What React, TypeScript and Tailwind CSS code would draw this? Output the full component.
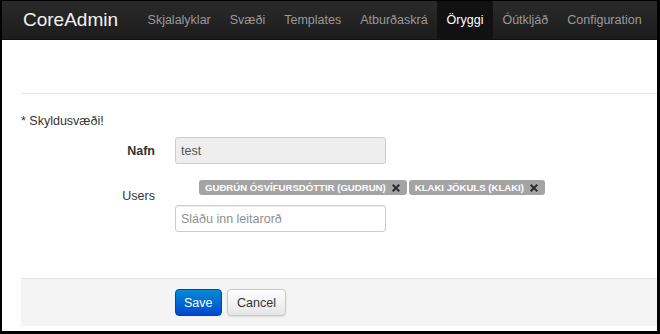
import React from "react";

const navItems = ["Skjalalyklar", "Svæði", "Templates", "Atburðaskrá", "Öryggi", "Óútkljáð", "Configuration"];

const users = [
  { name: "Guðrún Ósvífursdóttir", login: "gudrun" },
  { name: "Klaki Jökuls", login: "klaki" },
];

function RemoveIcon() {
  return (
    <svg width="8" height="8" viewBox="0 0 8 8" className="ml-[6px]">
      <path d="M1.4 1.4 L6.6 6.6 M6.6 1.4 L1.4 6.6" stroke="#2a2a2a" strokeWidth="2" strokeLinecap="square" />
    </svg>
  );
}

function Navbar() {
  return (
    <div className="flex h-[39px] items-stretch bg-gradient-to-b from-[#2a2a2a] to-[#1c1c1c] border-b border-[#111]">
      <div className="flex items-center pl-[21px] pr-[20px] text-[19px] text-[#f2f2f2]">CoreAdmin</div>
      {navItems.map((item) => (
        <div
          key={item}
          className={
            item === "Öryggi"
              ? "flex items-center px-[9.5px] text-[12.5px] text-white bg-[#111]"
              : "flex items-center px-[9.5px] text-[12.5px] text-[#9a9a9a]"
          }
        >
          {item}
        </div>
      ))}
    </div>
  );
}

export default function App() {
  return (
    <div className="w-[660px] h-[334px] flex flex-col bg-white border-black border-t border-l-2 border-r-[3px] border-b-[3px] font-['Liberation_Sans',Arial,sans-serif] text-[#333] text-[12.5px] leading-[18px]">
      <Navbar />
      <div className="flex flex-col pl-[19px]">
        <div className="h-[54px] border-b border-[#e5e5e5]" />
        <p className="mt-[18px]">* Skyldusvæði!</p>

        <div className="flex mt-[7px]">
          <label className="w-[134px] text-right font-bold pt-[5px]">Nafn</label>
          <input
            disabled
            value="test"
            readOnly
            className="ml-[20px] w-[211px] h-[27px] px-[5px] rounded-[3px] border border-[#ccc] bg-[#eee] text-[#555] text-[12.5px]"
          />
        </div>

        <div className="flex mt-[16px]">
          <label className="w-[134px] text-right pt-[7px]">Users</label>
          <div className="ml-[20px] flex flex-col">
            <div className="flex gap-[2px] ml-[24px]">
              {users.map((u) => (
                <span
                  key={u.login}
                  className="flex items-center h-[15px] pl-[6px] pr-[7px] rounded-[3px] bg-[#a4a4a4] text-white font-bold uppercase text-[9.6px] leading-[15px]"
                >
                  {u.name} ({u.login})
                  <RemoveIcon />
                </span>
              ))}
            </div>
            <input
              placeholder="Sláðu inn leitarorð"
              className="mt-[10px] w-[211px] h-[27px] px-[5px] rounded-[3px] border border-[#ccc] bg-white text-[12.5px] placeholder:text-[#8f8f8f] shadow-[inset_0_1px_1px_rgba(0,0,0,0.075)]"
            />
          </div>
        </div>

        <div className="mt-[46px] h-[48px] flex items-center gap-[5px] pl-[154px] bg-[#f4f4f4] border-t border-[#e3e3e3]">
          <button className="h-[27px] px-[8px] rounded-[4px] border border-[#0044aa] bg-gradient-to-b from-[#0a8ad8] to-[#0046cc] text-white text-[12.5px]">
            Save
          </button>
          <button className="h-[27px] px-[9.5px] rounded-[4px] border border-[#c8c8c8] bg-gradient-to-b from-white to-[#e6e6e6] text-[#333] text-[12.5px] shadow-[0_1px_2px_rgba(0,0,0,0.1)]">
            Cancel
          </button>
        </div>
      </div>
    </div>
  );
}
